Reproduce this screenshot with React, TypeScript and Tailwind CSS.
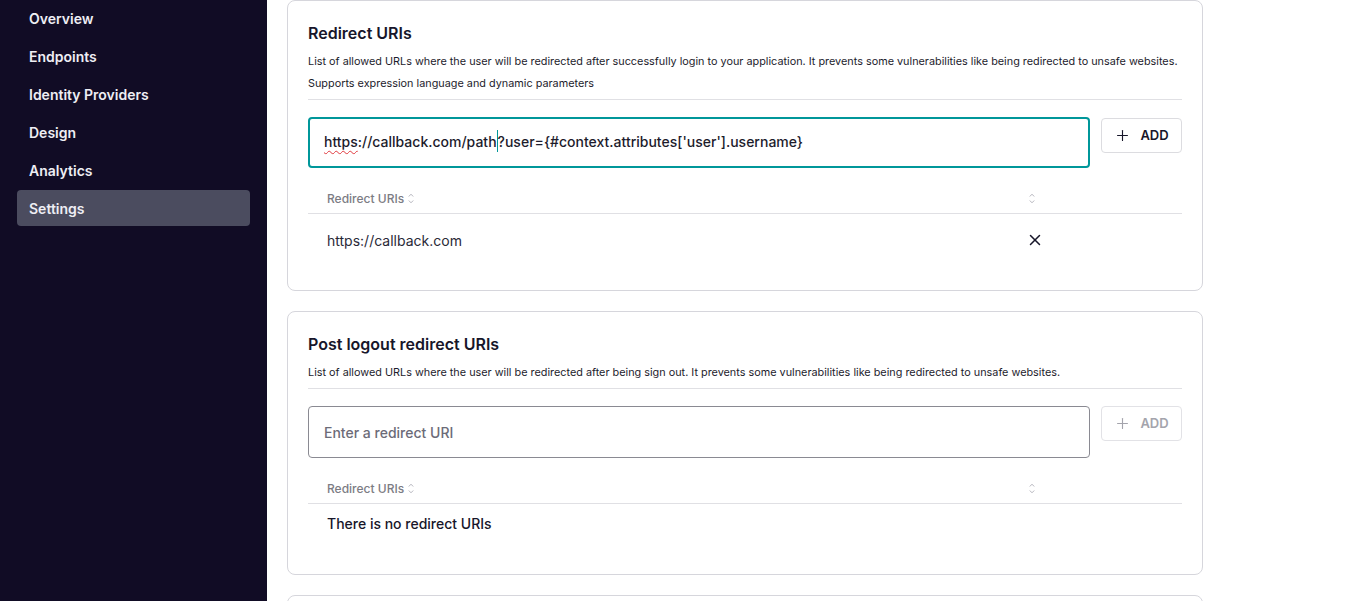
import { Plus, X } from 'lucide-react';

const NAV = ['Overview', 'Endpoints', 'Identity Providers', 'Design', 'Analytics', 'Settings'];

function SortIcon() {
  return (
    <svg width="6" height="11" viewBox="0 0 6 11" fill="none" stroke="#b5b5bd" strokeWidth="1">
      <path d="M0.8 3.5 L3 1.2 L5.2 3.5" />
      <path d="M0.8 7.5 L3 9.8 L5.2 7.5" />
    </svg>
  );
}

function AddButton({ disabled }: { disabled?: boolean }) {
  return (
    <button
      className={
        disabled
          ? 'flex h-[35px] w-[81px] shrink-0 items-center justify-center gap-[9px] rounded-[4px] border border-[#e2e2e6] text-[13px] font-semibold text-[#a4a4ac]'
          : 'flex h-[35px] w-[81px] shrink-0 items-center justify-center gap-[9px] rounded-[4px] border border-[#dcdce0] text-[13px] font-semibold text-[#17162a]'
      }
    >
      <Plus size={17} strokeWidth={1.6} />
      <span>ADD</span>
    </button>
  );
}

function TableHeader() {
  return (
    <div className="mt-4 flex h-[30px] items-center border-b border-[#e0e0e4] text-[12px] font-medium text-[#7c7c84]">
      <div className="flex flex-1 items-center gap-[4px] pl-[19px]">
        <span>Redirect URIs</span>
        <SortIcon />
      </div>
      <div className="w-[162px] pl-[9px]">
        <SortIcon />
      </div>
    </div>
  );
}

export default function App() {
  return (
    <div
      className="flex h-[601px] overflow-hidden bg-white text-[#17162a]"
      style={{ fontFamily: 'Inter, "Noto Sans", sans-serif' }}
    >
      {/* Sidebar */}
      <aside className="flex w-[267px] shrink-0 flex-col gap-[2px] bg-[#110c25] px-[17px]">
        {NAV.map((item) => (
          <div
            key={item}
            className={
              item === 'Settings'
                ? 'flex h-9 items-center rounded-[4px] bg-[#4b4c5f] px-3 text-[14px] font-semibold text-[#eeeef4]'
                : 'flex h-9 items-center px-3 text-[14px] font-semibold text-[#eeeef4]'
            }
          >
            {item}
          </div>
        ))}
      </aside>

      {/* Main */}
      <main className="flex flex-1 flex-col gap-[20px] pl-[20px]">
        {/* Redirect URIs */}
        <section className="w-[916px] shrink-0 rounded-[8px] border border-[#d6d6dc] px-[20px] pb-[24px] pt-[20px]">
          <h2 className="text-[16px] font-semibold leading-6">Redirect URIs</h2>
          <p className="mt-[5px] whitespace-nowrap text-[10.85px] leading-[22px] text-[#1d1c2c]">
            List of allowed URLs where the user will be redirected after successfully login to your application. It prevents some vulnerabilities like being redirected to unsafe websites.
            <br />
            Supports expression language and dynamic parameters
          </p>
          <div className="mt-[5px] border-t border-[#e0e0e4]" />

          <div className="mt-[17px] flex items-start gap-[11px]">
            <div className="flex h-[51px] flex-1 items-center rounded-[4px] border-2 border-[#00979a] px-[14px] pb-[3px] text-[14px] font-medium text-[#1d1c2c]">
              <span className="underline decoration-wavy decoration-[#e0393e] decoration-1 underline-offset-[3px]">https</span>
              <span>://callback.com/path</span>
              <span className="h-[22px] w-px bg-[#00979a]" />
              <span>?user={'{'}#context.attributes['user'].username{'}'}</span>
            </div>
            <div className="pt-px">
              <AddButton />
            </div>
          </div>

          <TableHeader />
          <div className="flex h-[52px] items-center text-[14px] text-[#2a2938]">
            <div className="flex-1 pl-[19px]">https://callback.com</div>
            <div className="w-[162px] pl-[6px]">
              <X size={18} strokeWidth={2} className="text-[#17162a]" />
            </div>
          </div>
        </section>

        {/* Post logout redirect URIs */}
        <section className="w-[916px] shrink-0 rounded-[8px] border border-[#d6d6dc] px-[20px] pb-[24px] pt-[20px]">
          <h2 className="text-[16px] font-semibold leading-6">Post logout redirect URIs</h2>
          <p className="mt-[5px] whitespace-nowrap text-[10.85px] leading-[22px] text-[#1d1c2c]">
            List of allowed URLs where the user will be redirected after being sign out. It prevents some vulnerabilities like being redirected to unsafe websites.
          </p>
          <div className="mt-[5px] border-t border-[#e0e0e4]" />

          <div className="mt-[17px] flex items-start gap-[11px]">
            <div className="flex h-[52px] flex-1 items-center rounded-[4px] border border-[#8a8a92] px-[15px] text-[14px] font-medium text-[#6c6b78]">
              Enter a redirect URI
            </div>
            <AddButton disabled />
          </div>

          <TableHeader />
          <div className="flex h-[46px] items-start pt-[10px] text-[14px] font-medium leading-5 text-[#17162a]">
            <div className="pl-[19px]">There is no redirect URIs</div>
          </div>
        </section>

        <section className="h-[60px] w-[916px] shrink-0 rounded-[8px] border border-[#d6d6dc]" />
      </main>
    </div>
  );
}
